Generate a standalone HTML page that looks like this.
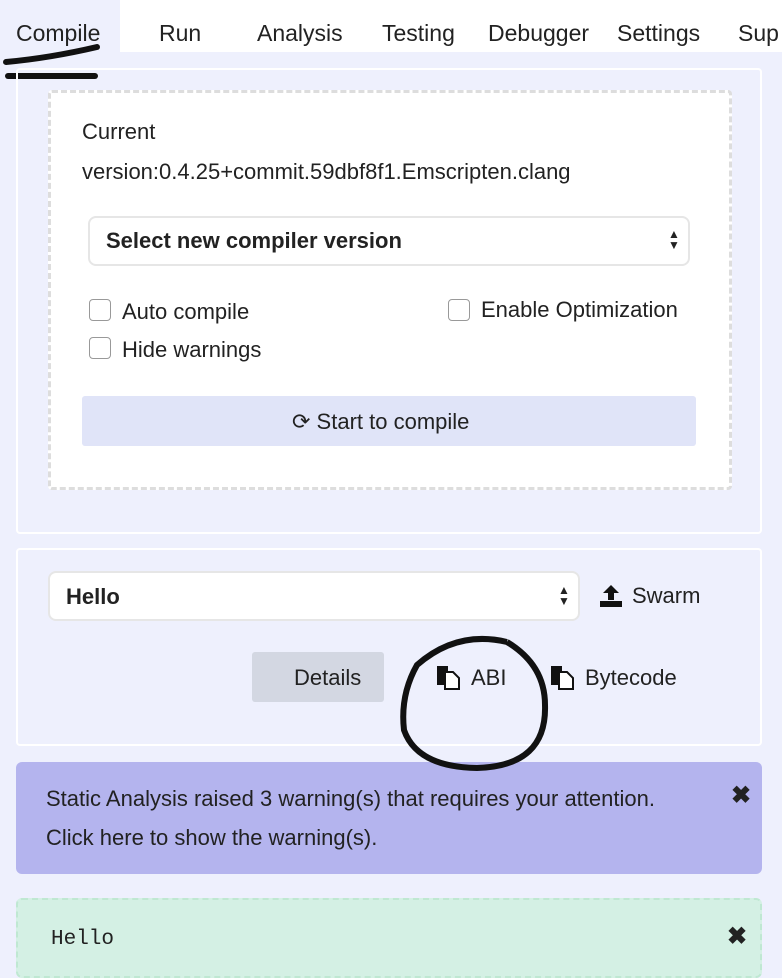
<!DOCTYPE html>
<html><head><style>
body{margin:0;width:782px;height:978px;background:#eef0fd;font-family:"Liberation Sans",sans-serif;color:#222;position:relative;overflow:hidden;font-size:22px}
.a{position:absolute}
.tab{position:absolute;top:20px;font-size:23px}
.cb{position:absolute;width:20px;height:20px;border:1px solid #999;border-radius:4px;background:#fff}
</style></head><body>
<div class="a" style="left:0;top:0;width:782px;height:52px;background:#fff"></div>
<div class="a" style="left:0;top:0;width:120px;height:52px;background:#eef0fd"></div>
<div class="tab" style="left:16px">Compile</div>
<div class="tab" style="left:159px">Run</div>
<div class="tab" style="left:257px">Analysis</div>
<div class="tab" style="left:382px">Testing</div>
<div class="tab" style="left:488px">Debugger</div>
<div class="tab" style="left:617px">Settings</div>
<div class="tab" style="left:738px">Sup</div>
<svg class="a" style="left:0;top:0" width="120" height="90"><path d="M6 62 Q50 58 97 47" stroke="#111" stroke-width="6" fill="none" stroke-linecap="round"/><path d="M8 76 L95 76" stroke="#111" stroke-width="6" stroke-linecap="round"/></svg>

<div class="a" style="left:16px;top:68px;width:742px;height:462px;border:2px solid #fff;border-radius:4px"></div>
<div class="a" style="left:48px;top:90px;width:678px;height:394px;background:#fff;border:3px dashed #ddd;border-radius:4px"></div>
<div class="a" style="left:82px;top:119px">Current</div>
<div class="a" style="left:82px;top:159px">version:0.4.25+commit.59dbf8f1.Emscripten.clang</div>
<div class="a" style="left:88px;top:216px;width:598px;height:46px;border:2px solid #e6e6e6;border-radius:8px;background:#fff"></div>
<div class="a" style="left:106px;top:228px;font-weight:bold">Select new compiler version</div>
<div class="a" style="left:668px;top:229px;font-size:12px;line-height:11px">▲<br>▼</div>
<div class="cb" style="left:89px;top:299px"></div><div class="a" style="left:122px;top:299px">Auto compile</div>
<div class="cb" style="left:89px;top:337px"></div><div class="a" style="left:122px;top:337px">Hide warnings</div>
<div class="cb" style="left:448px;top:299px"></div><div class="a" style="left:481px;top:297px">Enable Optimization</div>
<div class="a" style="left:82px;top:396px;width:614px;height:50px;background:#e0e4f8;border-radius:3px"></div>
<div class="a" style="left:292px;top:409px">⟳ Start to compile</div>

<div class="a" style="left:16px;top:548px;width:742px;height:194px;border:2px solid #fff;border-radius:4px"></div>
<div class="a" style="left:48px;top:571px;width:528px;height:46px;border:2px solid #e6e6e6;border-radius:8px;background:#fff"></div>
<div class="a" style="left:66px;top:584px;font-weight:bold">Hello</div>
<div class="a" style="left:558px;top:585px;font-size:12px;line-height:11px">▲<br>▼</div>
<svg class="a" style="left:600px;top:585px" width="24" height="22"><path d="M11 0 L19 8 H14 V15 H8 V8 H3 Z M0 16 H22 V22 H0 Z" fill="#111"/></svg>
<div class="a" style="left:632px;top:583px">Swarm</div>
<div class="a" style="left:252px;top:652px;width:132px;height:50px;background:#d3d7e2;border-radius:3px"></div>
<div class="a" style="left:294px;top:665px">Details</div>
<svg class="a" style="left:437px;top:666px" width="24" height="24"><rect x="0" y="0" width="11" height="19" fill="#111"/><path d="M8 6 H16 L22 12 V23 H8 Z" fill="#fff" stroke="#111" stroke-width="2"/></svg>
<div class="a" style="left:471px;top:665px">ABI</div>
<svg class="a" style="left:551px;top:666px" width="24" height="24"><rect x="0" y="0" width="11" height="19" fill="#111"/><path d="M8 6 H16 L22 12 V23 H8 Z" fill="#fff" stroke="#111" stroke-width="2"/></svg>
<div class="a" style="left:585px;top:665px">Bytecode</div>

<div class="a" style="left:16px;top:762px;width:746px;height:112px;background:#b4b4ee;border-radius:6px"></div>
<div class="a" style="left:46px;top:779px;line-height:39px">Static Analysis raised 3 warning(s) that requires your attention.<br>Click here to show the warning(s).</div>
<div class="a" style="left:731px;top:781px;font-weight:bold;font-size:24px">✖</div>
<svg class="a" style="left:392px;top:630px" width="165" height="148"><path d="M115 12 Q65 0 25 35 Q8 65 12 100 Q25 137 85 138 Q155 136 153 75 Q153 35 115 12" stroke="#111" stroke-width="6" fill="none"/></svg>

<div class="a" style="left:16px;top:898px;width:742px;height:76px;background:#d4f0e4;border:2px dashed #bfe8d2;border-radius:6px"></div>
<div class="a" style="left:51px;top:928px;font-family:'Liberation Mono',monospace;font-size:21px">Hello</div>
<div class="a" style="left:727px;top:922px;font-weight:bold;font-size:24px">✖</div>
</body></html>
